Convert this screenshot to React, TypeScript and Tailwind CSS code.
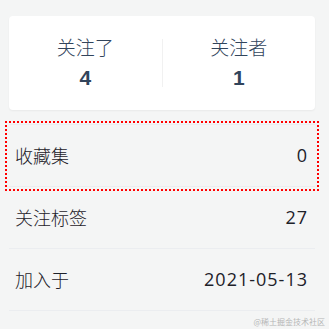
import React from "react";

const font = { fontFamily: '"Noto Sans CJK SC", "Noto Sans", sans-serif' };

export default function App() {
  const rows = [
    { label: "收藏集", value: "0", outlined: true },
    { label: "关注标签", value: "27" },
    { label: "加入于", value: "2021-05-13" },
  ];
  return (
    <div
      className="w-[329px] h-[329px] bg-[#f4f5f5] relative overflow-hidden pt-[16px] pl-[9px] pr-[14px]"
      style={font}
    >
      <div className="h-[94px] bg-white rounded-[4px] shadow-[0_1px_2px_rgba(0,0,0,0.05)] flex items-center">
        <div className="flex-1 flex flex-col items-center">
          <div className="text-[19px] leading-[22px] font-light text-[#31445b]">关注了</div>
          <div className="text-[21px] leading-[24px] font-bold text-[#31445b] mt-[8px] font-['Liberation_Sans',sans-serif]">
            4
          </div>
        </div>
        <div className="w-px h-[48px] bg-[#f1f1f1]" />
        <div className="flex-1 flex flex-col items-center">
          <div className="text-[19px] leading-[22px] font-light text-[#31445b]">关注者</div>
          <div className="text-[21px] leading-[24px] font-bold text-[#31445b] mt-[8px] font-['Liberation_Sans',sans-serif]">
            1
          </div>
        </div>
      </div>
      <div className="mt-[14px] border-t border-[#ebedf0]">
        {rows.map((r) => (
          <div
            key={r.label}
            className={
              "h-[62px] border-b border-[#ebedf0] flex items-center justify-between pl-[6px] pr-[7px] text-[18px] font-light text-[#1d2129] " +
              (r.outlined ? "outline-2 outline-dotted outline-[#ff0000] outline-offset-[2px]" : "")
            }
          >
            <span>{r.label}</span>
            <span className="tracking-[1px] font-['Open_Sans',sans-serif] font-normal">{r.value}</span>
          </div>
        ))}
      </div>
      <div className="absolute right-[4px] bottom-[2px] text-[8px] leading-[10px] text-[#b5b5b5]">
        @稀土掘金技术社区
      </div>
    </div>
  );
}
